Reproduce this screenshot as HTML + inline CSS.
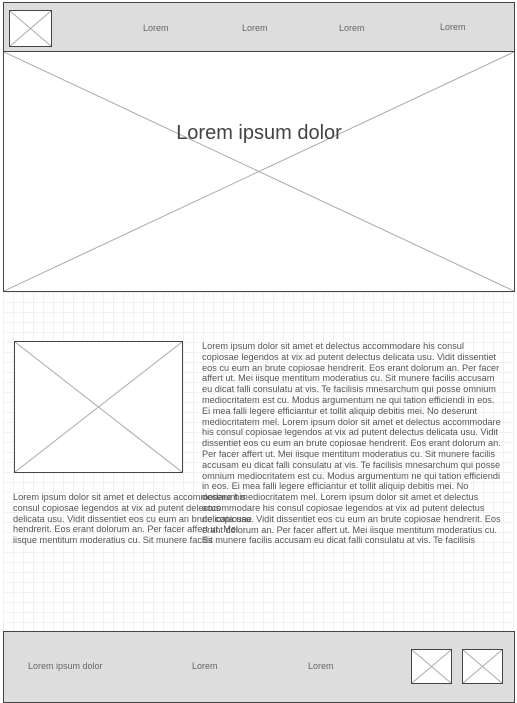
<!DOCTYPE html>
<html><head><meta charset="utf-8"><style>
*{margin:0;padding:0;box-sizing:border-box}
body{width:517px;height:700px;position:relative;background:#fff;font-family:"Liberation Sans",sans-serif;overflow:hidden}
.a{position:absolute}
.grid{left:3px;top:292px;width:512px;height:340px;background-color:#fff;background-image:linear-gradient(#f1f1f1 1px,transparent 1px),linear-gradient(90deg,#f1f1f1 1px,transparent 1px);background-size:10px 10px}
.ph{position:absolute;background:#fff;border:1px solid #444}
.ph svg{position:absolute;left:0;top:0;width:100%;height:100%}
.nav{font-size:9px;color:#666;top:23px}
.txt{font-size:9.2px;line-height:10.8px;color:#555;white-space:nowrap}
</style></head><body>
<div class="a grid"></div>
<div class="a" style="left:3px;top:2px;width:512px;height:51px;background:#ddd;border:1px solid #444;border-bottom:2px solid #444"></div>
<div class="ph" style="left:9px;top:10px;width:43px;height:37px"><svg viewBox="0 0 10 10" preserveAspectRatio="none"><path d="M0 0L10 10M10 0L0 10" stroke="#aaa" stroke-width="1" vector-effect="non-scaling-stroke"/></svg></div>
<div class="a nav" style="left:143px">Lorem</div>
<div class="a nav" style="left:242px">Lorem</div>
<div class="a nav" style="left:339px">Lorem</div>
<div class="a nav" style="left:440px;top:22px">Lorem</div>
<div class="ph" style="left:3px;top:52px;width:512px;height:240px;border-top:none"><svg viewBox="0 0 10 10" preserveAspectRatio="none"><path d="M0 0L10 10M10 0L0 10" stroke="#aaa" vector-effect="non-scaling-stroke"/></svg></div>
<div class="a" style="left:3px;top:122px;width:512px;text-align:center;font-size:20px;color:#444">Lorem ipsum dolor</div>
<div class="ph" style="left:14px;top:341px;width:169px;height:132px"><svg viewBox="0 0 10 10" preserveAspectRatio="none"><path d="M0 0L10 10M10 0L0 10" stroke="#aaa" vector-effect="non-scaling-stroke"/></svg></div>
<div class="a txt" style="left:202px;top:341px">Lorem ipsum dolor sit amet et delectus accommodare his consul<br>copiosae legendos at vix ad putent delectus delicata usu. Vidit dissentiet<br>eos cu eum an brute copiosae hendrerit. Eos erant dolorum an. Per facer<br>affert ut. Mei iisque mentitum moderatius cu. Sit munere facilis accusam<br>eu dicat falli consulatu at vis. Te facilisis mnesarchum qui posse omnium<br>mediocritatem est cu. Modus argumentum ne qui tation efficiendi in eos.<br>Ei mea falli legere efficiantur et tollit aliquip debitis mei. No deserunt<br>mediocritatem mel. Lorem ipsum dolor sit amet et delectus accommodare<br>his consul copiosae legendos at vix ad putent delectus delicata usu. Vidit<br>dissentiet eos cu eum an brute copiosae hendrerit. Eos erant dolorum an.<br>Per facer affert ut. Mei iisque mentitum moderatius cu. Sit munere facilis<br>accusam eu dicat falli consulatu at vis. Te facilisis mnesarchum qui posse<br>omnium mediocritatem est cu. Modus argumentum ne qui tation efficiendi<br>in eos. Ei mea falli legere efficiantur et tollit aliquip debitis mei. No<br>deserunt mediocritatem mel. Lorem ipsum dolor sit amet et delectus<br>accommodare his consul copiosae legendos at vix ad putent delectus<br>delicata usu. Vidit dissentiet eos cu eum an brute copiosae hendrerit. Eos<br>erant dolorum an. Per facer affert ut. Mei iisque mentitum moderatius cu.<br>Sit munere facilis accusam eu dicat falli consulatu at vis. Te facilisis</div>
<div class="a txt" style="left:13px;top:492px">Lorem ipsum dolor sit amet et delectus accommodare his<br>consul copiosae legendos at vix ad putent delectus<br>delicata usu. Vidit dissentiet eos cu eum an brute copiosae<br>hendrerit. Eos erant dolorum an. Per facer affert ut. Mei<br>iisque mentitum moderatius cu. Sit munere facilis</div>
<div class="a" style="left:3px;top:631px;width:512px;height:72px;background:#ddd;border:1px solid #444"></div>
<div class="a nav" style="left:28px;top:661px">Lorem ipsum dolor</div>
<div class="a nav" style="left:192px;top:661px">Lorem</div>
<div class="a nav" style="left:308px;top:661px">Lorem</div>
<div class="ph" style="left:411px;top:649px;width:41px;height:35px"><svg viewBox="0 0 10 10" preserveAspectRatio="none"><path d="M0 0L10 10M10 0L0 10" stroke="#aaa" vector-effect="non-scaling-stroke"/></svg></div>
<div class="ph" style="left:462px;top:649px;width:41px;height:35px"><svg viewBox="0 0 10 10" preserveAspectRatio="none"><path d="M0 0L10 10M10 0L0 10" stroke="#aaa" vector-effect="non-scaling-stroke"/></svg></div>
</body></html>
